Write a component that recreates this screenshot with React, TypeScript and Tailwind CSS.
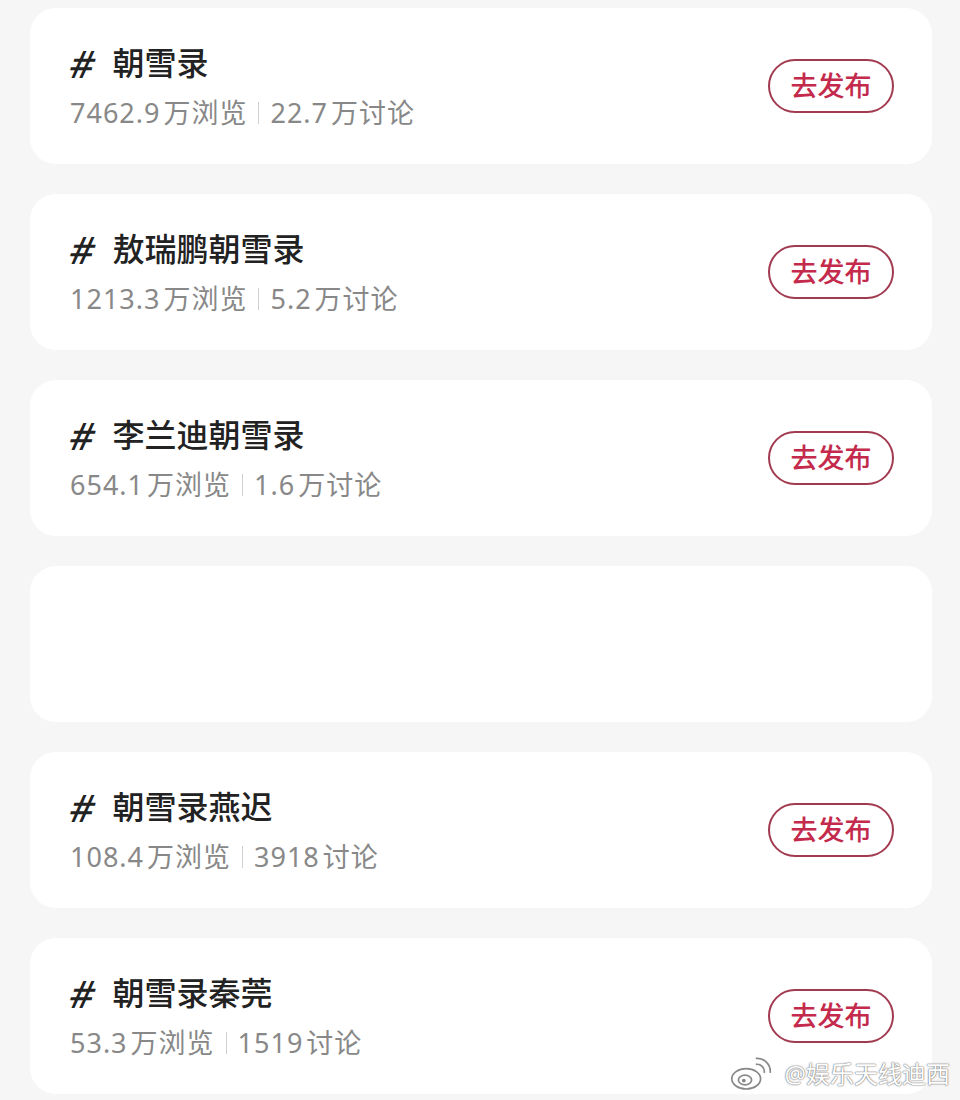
const TOPICS = [
  { title: "朝雪录", views: "7462.9", talks: "22.7万" },
  { title: "敖瑞鹏朝雪录", views: "1213.3", talks: "5.2万" },
  { title: "李兰迪朝雪录", views: "654.1", talks: "1.6万" },
  null,
  { title: "朝雪录燕迟", views: "108.4", talks: "3918" },
  { title: "朝雪录秦莞", views: "53.3", talks: "1519" },
];

type Topic = { title: string; views: string; talks: string };

function TopicCard({ topic }: { topic: Topic | null }) {
  if (!topic) {
    return <div className="h-[156px] rounded-[26px] bg-white" />;
  }
  return (
    <div className="flex h-[156px] items-center justify-between rounded-[26px] bg-white pl-[40px] pr-[38px]">
      <div className="flex flex-col">
        <div className="flex items-center text-[32px] leading-[40px] text-[#222]">
          <span className="ml-[1px] mr-[17px] -skew-x-[14deg] text-[38px] leading-[40px] font-medium">#</span>
          <span className="font-medium">{topic.title}</span>
        </div>
        <div className="mt-[14px] flex items-center text-[27px] leading-[32px] tracking-[1px] text-[#888]">
          <span>{topic.views}</span>
          <span className="ml-[3px]">万浏览</span>
          <span className="mx-[11px] h-[22px] w-px bg-[#d0d0d0]" />
          <span>{topic.talks.replace("万", "")}</span>
          <span className="ml-[3px]">{topic.talks.includes("万") ? "万讨论" : "讨论"}</span>
        </div>
      </div>
      <button className="flex h-[54px] w-[126px] items-center justify-center rounded-full border-2 border-[#a23a50] text-[27px] font-medium text-[#c42a4c]">
        去发布
      </button>
    </div>
  );
}

export default function App() {
  return (
    <div
      className="relative h-[1100px] w-[960px] overflow-hidden bg-[#f6f6f6]"
      style={{ fontFamily: '"Noto Sans", "Noto Sans CJK SC", sans-serif' }}
    >
      <div className="flex flex-col gap-[30px] pl-[30px] pr-[28px] pt-[8px]">
        {TOPICS.map((t, i) => (
          <TopicCard key={i} topic={t} />
        ))}
      </div>
      <div className="absolute bottom-[8px] right-[10px] flex items-center gap-[10px] text-[24px] text-white [text-shadow:0_0_2px_#777,0_0_1px_#555]">
        <svg width="46" height="36" viewBox="0 0 36 30" fill="none" stroke="#888" strokeWidth="1.4">
          <ellipse cx="14" cy="19" rx="12" ry="8.5" fill="#fff" />
          <ellipse cx="13" cy="20" rx="5.5" ry="4" fill="#fff" />
          <circle cx="12" cy="20.5" r="1.6" fill="#888" stroke="none" />
          <path d="M22 7 a6 6 0 0 1 7 7" />
          <path d="M22 2 a11 11 0 0 1 12 12" />
        </svg>
        <span>@娱乐天线迪西</span>
      </div>
    </div>
  );
}
